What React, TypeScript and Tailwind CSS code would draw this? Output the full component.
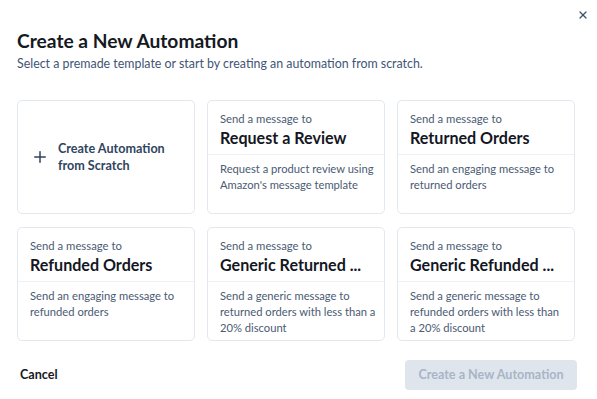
import { X, Plus } from "lucide-react";

interface Template {
  title: string;
  lines: string[];
}

const templates: Template[] = [
  {
    title: "Request a Review",
    lines: ["Request a product review using", "Amazon's message template"],
  },
  {
    title: "Returned Orders",
    lines: ["Send an engaging message to", "returned orders"],
  },
  {
    title: "Refunded Orders",
    lines: ["Send an engaging message to", "refunded orders"],
  },
  {
    title: "Generic Returned ...",
    lines: [
      "Send a generic message to",
      "returned orders with less than a",
      "20% discount",
    ],
  },
  {
    title: "Generic Refunded ...",
    lines: [
      "Send a generic message to",
      "refunded orders with less than",
      "a 20% discount",
    ],
  },
];

function TemplateCard({ item }: { item: Template }) {
  return (
    <button className="flex h-[114px] flex-col rounded-[5px] border border-[#e3e8ef] bg-white text-left">
      <div className="w-full border-b border-[#edf0f4] px-[12px] pb-[6px] pt-[9px]">
        <p className="text-[11.3px] leading-[17px] text-[#4a5b73]">
          Send a message to
        </p>
        <h3 className="whitespace-nowrap text-[16.1px] font-bold leading-[21px] text-[#14171f]">
          {item.title}
        </h3>
      </div>
      <div className="px-[12px] pt-[6px] text-[11.2px] leading-[16px] text-[#4a5b73]">
        {item.lines.map((line) => (
          <p key={line} className="whitespace-nowrap">
            {line}
          </p>
        ))}
      </div>
    </button>
  );
}

export default function App() {
  return (
    <div
      className="relative h-[399px] w-[597px] overflow-hidden bg-white px-[17px]"
      style={{ fontFamily: "Lato, 'Open Sans', sans-serif" }}
    >
      {/* Close */}
      <button className="absolute right-[8px] top-[9px] text-[#3d4f66]">
        <X className="h-[12px] w-[12px]" strokeWidth={2.5} />
      </button>

      {/* Header */}
      <h1 className="pt-[29px] text-[19.2px] font-bold leading-[24px] text-[#151922]">
        Create a New Automation
      </h1>
      <p className="mt-[3px] text-[12.4px] leading-[16px] text-[#3f5575]">
        Select a premade template or start by creating an automation from
        scratch.
      </p>

      {/* Templates */}
      <div className="mt-[28px] grid grid-cols-[178px_178px_178px] gap-x-[12px] gap-y-[13px]">
        <button className="flex h-[114px] items-center rounded-[5px] border border-[#e3e8ef] bg-white pl-[13px] text-left">
          <Plus className="h-[18px] w-[18px] shrink-0 text-[#2f4560]" strokeWidth={2} />
          <span className="ml-[9px] text-[12.6px] font-bold leading-[17px] text-[#2f4560]">
            Create Automation
            <br />
            from Scratch
          </span>
        </button>
        {templates.map((t) => (
          <TemplateCard key={t.title} item={t} />
        ))}
      </div>

      {/* Footer */}
      <div className="mt-[19px] flex items-center justify-between pl-[3px] pr-[3px]">
        <button className="text-[12.6px] font-bold text-[#151922]">Cancel</button>
        <button className="h-[30px] w-[172px] rounded-[4px] bg-[#dfe5ed] text-[12.6px] font-bold text-[#a7b5c7]">
          Create a New Automation
        </button>
      </div>
    </div>
  );
}
